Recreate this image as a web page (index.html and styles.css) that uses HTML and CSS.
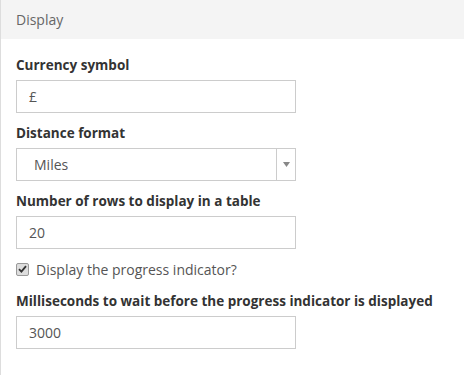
FILE: index.html
```html
<!DOCTYPE html>
<html>
<head>
<meta charset="utf-8">
<link rel="stylesheet" href="styles.css">
</head>
<body>
<div class="panel">
  <div class="panel-header">Display</div>
  <div class="panel-body">
    <div class="field">
      <label class="field-label">Currency symbol</label>
      <div class="text-input">£</div>
    </div>
    <div class="field">
      <label class="field-label">Distance format</label>
      <div class="select-input">
        <span class="select-value">Miles</span>
        <span class="select-arrow">
          <svg width="7" height="5" viewBox="0 0 7 5"><path d="M0 0H7L3.5 5Z" fill="#888"/></svg>
        </span>
      </div>
    </div>
    <div class="field">
      <label class="field-label">Number of rows to display in a table</label>
      <div class="text-input">20</div>
    </div>
    <div class="check-row">
      <span class="check-box">
        <svg width="9" height="8" viewBox="0 0 9 8"><path d="M1 4.2L3.4 6.6L8 1.2" fill="none" stroke="#333" stroke-width="1.8"/></svg>
      </span>
      <span class="check-text">Display the progress indicator?</span>
    </div>
    <div class="field">
      <label class="field-label">Milliseconds to wait before the progress indicator is displayed</label>
      <div class="text-input">3000</div>
    </div>
  </div>
</div>
</body>
</html>
```
FILE: styles.css
```css
html, body {
  margin: 0;
  padding: 0;
  background: #fff;
  height: 100%;
}
body {
  font-family: "Open Sans", "Lato", sans-serif;
  font-size: 14px;
  color: #333;
}
.panel {
  border-left: 1px solid #ddd;
  min-height: 100%;
  box-sizing: border-box;
}
.panel-header {
  height: 39px;
  line-height: 39px;
  padding: 0 15px;
  background: #f4f4f4;
  color: #666;
  font-size: 14px;
}
.panel-body {
  padding: 16px 15px 0;
}
.field {
  margin-bottom: 10px;
}
.field-label {
  display: block;
  font-weight: 700;
  font-size: 13.5px;
  line-height: 20px;
  margin-bottom: 5px;
  color: #333;
}
.text-input, .select-input {
  width: 280px;
  height: 33px;
  box-sizing: border-box;
  border: 1px solid #ccc;
  color: #555;
  display: flex;
  align-items: center;
}
.text-input {
  padding-left: 12px;
}
.select-input {
  justify-content: space-between;
}
.select-value {
  padding-left: 17px;
}
.select-arrow {
  width: 18px;
  height: 100%;
  border-left: 1px solid #ccc;
  display: flex;
  align-items: center;
  justify-content: center;
}
.check-row {
  display: flex;
  align-items: center;
  gap: 7px;
  height: 20px;
  margin-bottom: 12px;
  color: #555;
}
.check-box {
  width: 11px;
  height: 11px;
  border: 1px solid #999;
  border-radius: 2px;
  background: #ddd;
  display: flex;
  align-items: center;
  justify-content: center;
}
```
